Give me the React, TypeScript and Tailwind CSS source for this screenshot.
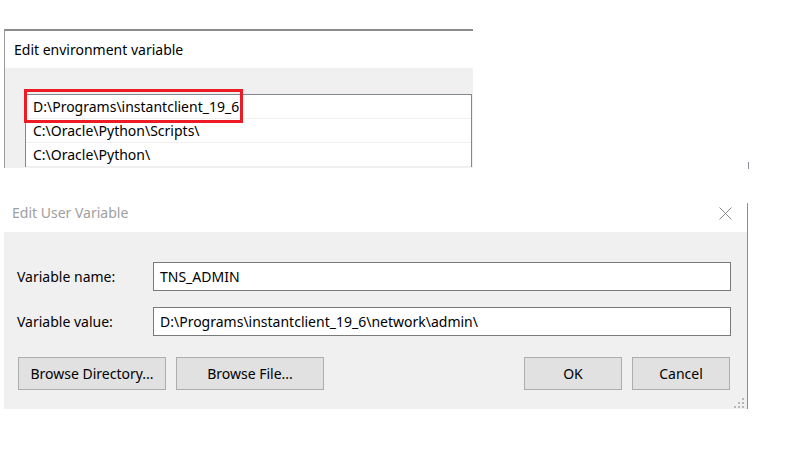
const rows = [
  "D:\\Programs\\instantclient_19_6",
  "C:\\Oracle\\Python\\Scripts\\",
  "C:\\Oracle\\Python\\",
];

function CloseGlyph() {
  return (
    <svg width="13" height="13" viewBox="0 0 13 13" className="mt-[4px]">
      <path d="M0.5 0.5 L12.5 12.5 M12.5 0.5 L0.5 12.5" stroke="#8a8a8a" strokeWidth="1" fill="none" />
    </svg>
  );
}

function ResizeGrip() {
  // six small dots arranged as a triangle, bottom-right
  const dots = [
    [8, 0],
    [4, 4],
    [8, 4],
    [0, 8],
    [4, 8],
    [8, 8],
  ];
  return (
    <svg width="10" height="10" className="absolute bottom-[1px] right-[3px]">
      {dots.map(([x, y]) => (
        <rect key={`${x}-${y}`} x={x} y={y} width="2" height="2" fill="#b8b8b8" />
      ))}
    </svg>
  );
}

function WinButton({ label, wide }: { label: string; wide?: boolean }) {
  return (
    <button
      className={`flex h-[33px] items-center justify-center border border-[#adadad] bg-[#e1e1e1] text-[14px] text-black ${
        wide ? "w-[148px]" : "w-[98px]"
      }`}
    >
      {label}
    </button>
  );
}

function Field({ label, value }: { label: string; value: string }) {
  return (
    <div className="flex items-center">
      <span className="w-[136px] text-[14px] text-black">{label}</span>
      <div className="flex h-[29px] flex-1 items-center border border-[#7a7a7a] bg-white pl-[6px] text-[14px] text-black">
        {value}
      </div>
    </div>
  );
}

export default function App() {
  return (
    <div className="relative h-[451px] w-[799px] overflow-hidden bg-white font-['Noto_Sans',sans-serif] leading-[20px]">
      {/* cropped "Edit environment variable" window */}
      <div className="pl-1 pt-[29px]">
        <div className="relative w-[469px] border-l border-t-2 border-l-[#9a9a9a] border-t-[#8c8c8c]">
          <div className="flex h-[37px] items-center pl-[9px] pt-px text-[14px] text-black">
            Edit environment variable
          </div>
          <div className="h-[100px] bg-[#f0f0f0] pl-[20px] pr-px pt-[26px]">
            <div className="border-x border-t border-[#828790] bg-white">
              {rows.map((r) => (
                <div
                  key={r}
                  className="flex h-[24px] items-center border-b border-[#f0f0f0] pl-[7px] text-[14px] text-black"
                >
                  {r}
                </div>
              ))}
            </div>
          </div>
          <div className="absolute left-[19px] top-[58px] h-[34px] w-[219px] border-[3px] border-[#ed1c24]" />
        </div>
      </div>

      <div className="absolute left-[748px] top-[162px] h-[7px] w-px bg-[#8a8a9a]" />

      {/* Edit User Variable dialog */}
      <div className="ml-1 mt-[35px] w-[744px] border-r border-[#8c8c8c]">
        <div className="flex h-[29px] items-start justify-between pl-[8px] pr-[15px]">
          <span className="text-[14px] text-[#a0a0a0]">Edit User Variable</span>
          <CloseGlyph />
        </div>
        <div className="relative bg-[#f0f0f0] pb-[19px] pl-[13px] pr-[16px] pt-[30px]">
          <div className="flex flex-col gap-[16px]">
            <Field label="Variable name:" value="TNS_ADMIN" />
            <Field label="Variable value:" value="D:\Programs\instantclient_19_6\network\admin\" />
          </div>
          <div className="mt-[21px] flex items-center pl-px">
            <div className="flex gap-[10px]">
              <WinButton label="Browse Directory..." wide />
              <WinButton label="Browse File..." wide />
            </div>
            <div className="ml-auto flex gap-[10px] pr-px">
              <WinButton label="OK" />
              <WinButton label="Cancel" />
            </div>
          </div>
          <ResizeGrip />
        </div>
      </div>
    </div>
  );
}
